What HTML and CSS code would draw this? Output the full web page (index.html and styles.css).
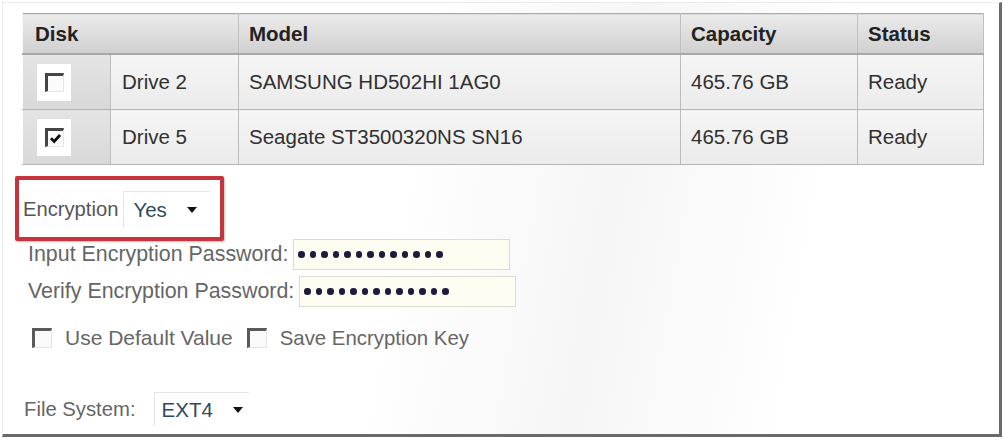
FILE: index.html
```html
<!DOCTYPE html>
<html>
<head>
<meta charset="utf-8">
<link rel="stylesheet" href="styles.css">
</head>
<body>
<div class="frame">
  <table class="disks">
    <colgroup>
      <col class="c-check"><col class="c-name"><col class="c-model"><col class="c-cap"><col class="c-status">
    </colgroup>
    <thead>
      <tr><th colspan="2" class="th-disk">Disk</th><th>Model</th><th>Capacity</th><th>Status</th></tr>
    </thead>
    <tbody>
      <tr>
        <td class="td-check"><span class="cbwrap"><span class="cb"></span></span></td>
        <td class="td-name">Drive 2</td>
        <td>SAMSUNG HD502HI 1AG0</td>
        <td>465.76 GB</td>
        <td>Ready</td>
      </tr>
      <tr>
        <td class="td-check"><span class="cbwrap"><span class="cb checked"><svg viewBox="0 0 12 12" width="13" height="13"><path d="M1.8 5.8 L4.8 8.8 L10.2 2.8" fill="none" stroke="#111" stroke-width="2.6"/></svg></span></span></td>
        <td class="td-name">Drive 5</td>
        <td>Seagate ST3500320NS SN16</td>
        <td>465.76 GB</td>
        <td>Ready</td>
      </tr>
    </tbody>
  </table>

  <div class="highlight">
    <span class="enc-label">Encryption</span>
    <span class="select sel-yes"><span class="sel-text">Yes</span><span class="caret"></span></span>
  </div>

  <div class="field f-input">
    <span class="lbl">Input Encryption Password:</span>
    <span class="pw"><i></i><i></i><i></i><i></i><i></i><i></i><i></i><i></i><i></i><i></i><i></i><i></i><i></i></span>
  </div>
  <div class="field f-verify">
    <span class="lbl">Verify Encryption Password:</span>
    <span class="pw"><i></i><i></i><i></i><i></i><i></i><i></i><i></i><i></i><i></i><i></i><i></i><i></i><i></i></span>
  </div>

  <div class="opts">
    <span class="cb plain"></span><span class="opt-text opt-1">Use Default Value</span>
    <span class="cb plain"></span><span class="opt-text opt-2">Save Encryption Key</span>
  </div>

  <div class="fs">
    <span class="lbl">File System:</span>
    <span class="select sel-fs"><span class="sel-text">EXT4</span><span class="caret"></span></span>
  </div>
</div>
</body>
</html>
```
FILE: styles.css
```css
html, body {
  margin: 0;
  padding: 0;
  background: #ffffff;
}
body {
  font-family: "Liberation Sans", Arial, sans-serif;
  width: 1004px;
  height: 440px;
  overflow: hidden;
}
.frame {
  box-sizing: border-box;
  width: 1000px;
  height: 435px;
  margin: 2px 0 0 2px;
  border-left: 1px solid #ececec;
  border-top: 1px solid #ececec;
  border-right: 3px solid #6a6a6a;
  border-bottom: 3px solid #6a6a6a;
  background: linear-gradient(100deg, #ffffff 0%, #ffffff 40%, #f6f6f6 60%, #ffffff 80%);
  padding-top: 10px;
}
.disks {
  border-collapse: collapse;
  margin-left: 19px;
  width: 961px;
  table-layout: fixed;
  border: 1px solid #a9a9a9;
  font-size: 20.5px;
  color: #303030;
}
.c-check { width: 88px; }
.c-name { width: 128px; }
.c-model { width: 442px; }
.c-cap { width: 177px; }
.c-status { width: 126px; }
.disks th {
  height: 39px;
  text-align: left;
  font-weight: bold;
  color: #222;
  padding: 0 0 0 10px;
  background: linear-gradient(#ebebeb, #dedede 50%, #cfcfcf);
  border-right: 1px solid #c0c0c0;
  border-left: 1px solid #f6f6f6;
  border-bottom: 2px solid #a8a8a8;
}
.disks th.th-disk { padding-left: 12px; }
.disks td {
  height: 54px;
  padding: 0 0 0 10px;
  background: linear-gradient(#f5f5f5, #ebebeb);
  border-right: 1px solid #bdbdbd;
  border-left: 1px solid #ffffff;
  border-bottom: 1px solid #b4b4b4;
}
.disks td.td-name { padding-left: 11px; }
.disks td.td-check {
  padding: 0 0 0 14px;
  background: linear-gradient(#e4e4e4, #d8d8d8);
}
.cbwrap {
  display: flex;
  align-items: center;
  justify-content: center;
  width: 34px;
  height: 37px;
  background: #ffffff;
}
.cb {
  display: inline-flex;
  align-items: center;
  justify-content: center;
  box-sizing: border-box;
  width: 19px;
  height: 19px;
  border-top: 3px solid #454545;
  border-left: 3px solid #454545;
  border-right: 1px solid #e6e6e6;
  border-bottom: 1px solid #e6e6e6;
  background: #fbfbfb;
}
.cb.checked svg { display: block; }

.highlight {
  box-sizing: border-box;
  display: flex;
  align-items: center;
  width: 209px;
  height: 65px;
  margin: 11px 0 0 12px;
  padding: 1px 0 0 4px;
  border: 4px solid #c7343c;
  border-radius: 2px;
  box-shadow: 1px 1px 2px rgba(0,0,0,0.25);
  position: relative;
  z-index: 1;
}
.enc-label {
  font-size: 20.2px;
  color: #555;
}
.select {
  display: inline-flex;
  align-items: center;
  box-sizing: border-box;
  background: #ffffff;
  border-top: 1px solid #e4e4e4;
  border-left: 1px solid #e4e4e4;
  color: #2f4a5c;
  font-size: 20.5px;
}
.sel-yes {
  width: 87px;
  height: 36px;
  margin-left: 5px;
  padding-left: 9px;
}
.caret {
  width: 0;
  height: 0;
  border-left: 5px solid transparent;
  border-right: 5px solid transparent;
  border-top: 6px solid #111;
  margin-left: auto;
  margin-right: 13px;
}
.field {
  display: flex;
  align-items: center;
  gap: 5px;
  color: #666;
  font-size: 21.4px;
}
.f-input { margin: -2px 0 0 25px; height: 31px; }
.f-verify { margin: 6px 0 0 25px; height: 31px; }
.pw {
  box-sizing: border-box;
  display: flex;
  align-items: center;
  gap: 4.9px;
  width: 217px;
  height: 31px;
  padding-left: 4px;
  background: #fdfdf2;
  border: 1px solid #dcdcd0;
}
.pw i {
  display: block;
  width: 6.6px;
  height: 6.6px;
  border-radius: 50%;
  background: #1c1c3c;
}
.opts {
  display: flex;
  align-items: center;
  margin: 19px 0 0 29px;
  height: 24px;
  color: #666;
  font-size: 21px;
}
.cb.plain {
  width: 20px;
  height: 20px;
  background: #fafafa;
  border-top: 3px solid #5a5a5a;
  border-left: 3px solid #5a5a5a;
}
.opt-1 { margin: 0 14px 0 13px; }
.opt-2 { margin: 0 0 0 13px; font-size: 20.4px; }
.fs {
  display: flex;
  align-items: center;
  margin: 42px 0 0 21px;
  color: #666;
  font-size: 20.3px;
}
.sel-fs {
  width: 95px;
  height: 34px;
  margin-left: 18px;
  padding-left: 7px;
  color: #2f4a5c;
}
.sel-fs .caret { margin-right: 6px; }
```
